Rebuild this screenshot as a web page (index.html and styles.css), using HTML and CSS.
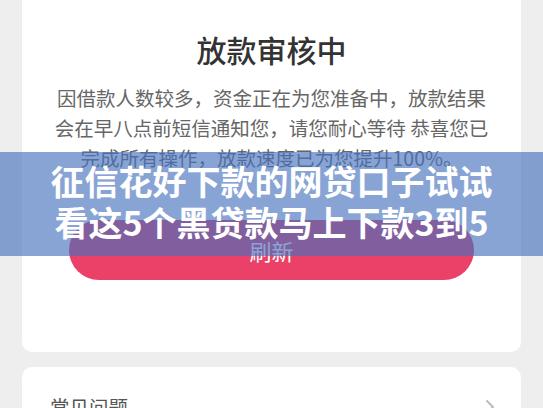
FILE: index.html
```html
<!DOCTYPE html>
<html lang="zh-CN">
<head>
<meta charset="utf-8">
<title>放款审核中</title>
<link rel="stylesheet" href="styles.css">
</head>
<body>
<div class="page">
  <section class="card status-card">
    <h1 class="status-title">放款审核中</h1>
    <p class="status-text">因借款人数较多，资金正在为您准备中，放款结果会在早八点前短信通知您，请您耐心等待 恭喜您已完成所有操作，放款速度已为您提升100%。</p>
    <button class="refresh-btn" type="button">刷新</button>
  </section>
  <section class="card faq-card">
    <div class="faq-row">
      <span class="faq-label">常见问题</span>
      <svg class="chevron" width="10" height="16" viewBox="0 0 10 16"><path d="M2 2 L8 8 L2 14" fill="none" stroke="#bdbdbd" stroke-width="2" stroke-linecap="round" stroke-linejoin="round"/></svg>
    </div>
  </section>
</div>
<div class="banner">
  <p class="banner-text">征信花好下款的网贷口子试试看这5个黑贷款马上下款3到5</p>
</div>
</body>
</html>
```
FILE: styles.css
```css
html, body {
  margin: 0;
  padding: 0;
}
body {
  background: #eeeeee;
  font-family: "Noto Sans CJK SC", "Noto Sans", sans-serif;
  width: 543px;
  height: 408px;
  overflow: hidden;
  position: relative;
}
.page {
  padding: 0 22px;
  display: flex;
  flex-direction: column;
}
.card {
  background: #ffffff;
  border-radius: 10px;
}
.status-card {
  margin-top: -20px;
  padding: 49px 0 72px;
  display: flex;
  flex-direction: column;
  align-items: center;
}
.status-title {
  margin: 0;
  font-size: 30px;
  line-height: 40px;
  font-weight: 500;
  color: #333333;
}
.status-text {
  margin: 14px 0 0;
  padding: 0 29px;
  font-size: 19.5px;
  line-height: 30px;
  color: #666666;
  text-align: center;
}
.refresh-btn {
  margin-top: 47px;
  width: 405px;
  height: 60px;
  border: none;
  border-radius: 30px;
  background: #eb4169;
  color: #ffffff;
  font-family: inherit;
  font-size: 22px;
  line-height: 60px;
  padding: 0;
}
.faq-card {
  margin-top: 15px;
  padding: 28px 26px 24px 28px;
}
.faq-row {
  display: flex;
  align-items: center;
  justify-content: space-between;
}
.faq-label {
  font-size: 19.5px;
  line-height: 24px;
  color: #555555;
}
.chevron {
  display: block;
}
.banner {
  position: absolute;
  left: 0;
  right: 0;
  top: 152px;
  height: 104px;
  background: rgba(69, 112, 189, 0.64);
  box-sizing: border-box;
  padding: 8px 40px 0;
}
.banner-text {
  margin: 0;
  color: #ffffff;
  font-size: 34px;
  line-height: 41px;
  font-weight: 700;
  text-align: center;
}
```
